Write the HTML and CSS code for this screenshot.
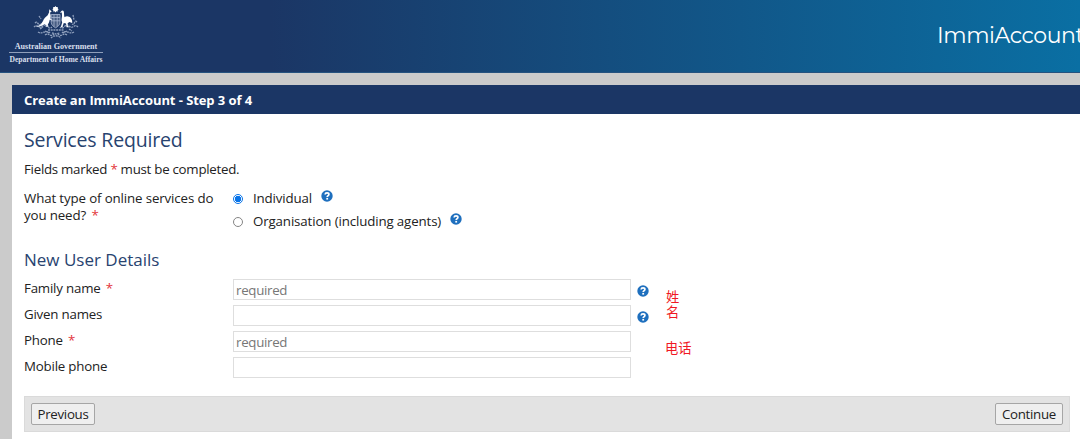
FILE: index.html
```
<!DOCTYPE html>
<html lang="en">
<head>
<meta charset="utf-8">
<title>ImmiAccount</title>
<link rel="stylesheet" href="styles.css">
</head>
<body>
<svg width="0" height="0" class="defs" aria-hidden="true">
  <symbol id="help" viewBox="0 0 12 12">
    <circle cx="6" cy="6" r="5.7" fill="#1e6fbe"/>
    <path d="M4.100 4.500C4.200 3.200 5 2.900 6 2.900c1.200 0 1.900.6 1.900 1.500C7.900 5.700 6.200 5.600 6.200 7.100" fill="none" stroke="#fff" stroke-width="1.700"/>
    <rect x="5.300" y="7.900" width="1.800" height="1.700" fill="#fff"/>
  </symbol>
</svg>
<header class="banner">
  <div class="brand">
    <svg class="crest" viewBox="0 0 46 34" aria-hidden="true">
      <g fill="#fff">
        <circle cx="22.500" cy="3" r="2.300"/>
        <path d="M22.500 0l.8 1.300 1.500-.4-.3 1.500 1.300.9-1.300.8.3 1.500-1.500-.3-.8 1.300-.9-1.300-1.500.3.4-1.500-1.300-.8 1.300-.9-.4-1.500 1.500.4z"/>
        <path d="M16.300 3.300l1.300 1.200 1 .9-.7.900-1.100.3c.9 2 1.300 3.800.6 5.800l1.900 1.300-.4.8-2.200-.8c-.5 2-.8 3.500-1.900 4.500l.8 2.500h-3.200l.6-1-1.300-1.800c-2 1.700-4.600 2.800-9.400 3 4-1.200 6.200-2.800 7.700-6 .9-2.300 2.800-4.300 4.700-5.700l1.300-2.600z"/>
        <path d="M28 5.600c.8-1.400 2.200-1.400 2.700-.3.600 1.900.2 4.200.8 6 1.900-1.700 4.700-1.200 6.500.9 1 1.300 1.400 2.900 1.200 4.700l-2.800-.8-1.800 1.200.7 3.200 1.500.8h-3.300l-.5-3.800-2.200-.6-1.300 3.600 1 .8h-2.700l1.400-5c-1.200-2-.3-4.400-.2-6.400l-.2-3.500-1.900.4z"/>
      </g>
      <path d="M18.200 8.500h8.800v7.700c0 2.700-2 4.200-4.400 5.600-2.400-1.400-4.400-2.900-4.400-5.600zM18.200 14.800H27M21 8.500v12M24.200 8.500v12M18.500 11.500H27" fill="#fff" fill-opacity=".2" stroke="#a9b8d2" stroke-width=".8"/>
      <path d="M2 17c3-3 3 4 6 1M1 21c4-4 5 3 9-1s5 5 9 1M44 16c-3-3-2 4-5 2M45 21c-4-4-5 3-9-1s-5 5-9 1M5 26c4 3 8-3 12 1M41 26c-4 3-8-3-12 1M12 29c4-3 5 3 9-1M34 29c-4-3-5 3-9-1M15 24h16M18 32c3-3 7-3 10 0M6 10l2 3M40 9l1 5M7 23l3-2M36 23l3 2M12 25l4 2M34 25l-4 2M19 27l4 1 4-1" fill="none" stroke="#b5c3da" stroke-width="1.300" stroke-dasharray="2 .7" opacity=".75"/>
    </svg>
    <div class="gov">Australian Government</div>
    <div class="dept">Department of Home Affairs</div>
  </div>
  <div class="product">ImmiAccount</div>
</header>
<main class="panel">
  <h1 class="titlebar"><span>Create an ImmiAccount - Step 3 of 4</span></h1>
  <div class="content">
    <h2 class="heading services-heading">Services Required</h2>
    <p class="note">Fields marked <b class="star">*</b> must be completed.</p>
    <div class="question">
      <div class="question-label">What type of online services do<br>you need? <b class="star gap">*</b></div>
      <div class="options">
        <label class="option"><i class="radio checked"></i><span class="individual">Individual</span><svg class="help"><use href="#help"/></svg></label>
        <label class="option"><i class="radio"></i><span class="organisation">Organisation (including agents)</span><svg class="help"><use href="#help"/></svg></label>
      </div>
    </div>
    <h2 class="heading details-heading">New User Details</h2>
    <div class="details">
      <div class="fields">
        <div class="row"><label>Family name <b class="star gap">*</b></label><input placeholder="required"><svg class="help"><use href="#help"/></svg></div>
        <div class="row"><label>Given names</label><input><svg class="help"><use href="#help"/></svg></div>
        <div class="row"><label>Phone <b class="star gap">*</b></label><input placeholder="required"></div>
        <div class="row"><label>Mobile phone</label><input></div>
      </div>
      <div class="remarks" lang="zh"><div class="name">姓<br>名</div><div class="phone">电话</div></div>
    </div>
    <div class="actions"><button class="previous">Previous</button><button class="continue">Continue</button></div>
  </div>
</main>
</body>
</html>
```
FILE: styles.css
```
* { box-sizing: border-box; }
body {
  margin: 0;
  height: 439px;
  overflow: hidden;
  background: #cbcbcb;
  color: #222;
  font: 13.3px/17px "Open Sans", "Noto Sans", sans-serif;
  letter-spacing: -.13px;
}
.defs { position: absolute; }
.banner {
  height: 73px;
  display: flex;
  justify-content: space-between;
  background: linear-gradient(90deg, #1b3665 0%, #1b3665 25%, #0a6fa3 100%);
  border-bottom: 1px solid #25527f;
  color: #fff;
  overflow: hidden;
}
.brand {
  width: 94px;
  margin-left: 9px;
  padding-top: 6px;
  display: flex;
  flex-direction: column;
  align-items: center;
  font-family: "Liberation Serif", serif;
  font-weight: bold;
  letter-spacing: 0;
  white-space: nowrap;
  color: #d8dfeb;
}
.crest { width: 46px; height: 34px; flex: none; }
.gov { font-size: 8.100px; line-height: 13px; height: 12px; }
.dept { width: 94px; border-top: 1px solid #8f9fbb; font-size: 7.600px; line-height: 14px; text-align: center; }
.product {
  width: 143px;
  flex: none;
  padding-top: 21px;
  font: 22px/30px Montserrat, "Open Sans", sans-serif;
  letter-spacing: -.42px;
  white-space: nowrap;
}
.panel { height: 354px; margin: 12px 0 0 12px; background: #fff; }
.titlebar {
  margin: 0;
  height: 29px;
  padding-left: 12px;
  background: #1b3665;
  color: #fff;
  font-size: 13px;
  line-height: 30px;
  letter-spacing: -.08px;
}
.content { padding: 14px 10px 0 12px; }
.heading { margin: 0; color: #28436f; font-weight: 400; }
.services-heading { height: 24px; font-size: 19.500px; line-height: 24px; letter-spacing: -.18px; }
.note { margin: 9px 0 0; height: 17px; letter-spacing: -.27px; }
.star { color: #e3343b; font-weight: 400; }
.gap { margin-left: 2px; }
.question { height: 54px; margin-top: 12px; display: flex; }
.question-label { width: 209px; }
.option { height: 23px; display: flex; align-items: flex-start; }
.radio {
  width: 10px;
  height: 10px;
  margin: 4px 10px 0 0;
  border: 1px solid #858585;
  border-radius: 50%;
}
.radio.checked { border-color: #0874e9; background: radial-gradient(circle, #0874e9 0 2.900px, #fff 3.400px); }
.help { width: 12px; height: 12px; flex: none; }
.option .help { margin: 0 0 0 9px; }
.details-heading { margin-top: 4px; height: 24px; font-size: 17px; line-height: 23px; letter-spacing: 0; }
.details { display: flex; margin-top: 7px; height: 117px; }
.fields { width: 641px; display: grid; grid-auto-rows: 26px; align-content: start; }
.row { display: flex; }
.row label { width: 209px; flex: none; padding-top: 1px; letter-spacing: -.2px; }
.row input {
  width: 398px;
  height: 21px;
  padding: 1px 2px;
  border: 1px solid #dedede;
  background: #fff;
  font: inherit;
  letter-spacing: -.3px;
}
.row input::placeholder { color: #777; opacity: 1; }
.row .help { margin: 6px 0 0 6px; }
.remarks { color: #f01824; font: 13.300px/14.500px "Noto Sans CJK SC", sans-serif; letter-spacing: 0; }
.name { margin: 11px 0 0 1px; }
.phone { margin-top: 22px; }
.actions {
  height: 36px;
  display: flex;
  justify-content: space-between;
  align-items: center;
  padding: 0 6px;
  background: #e3e3e3;
  border: 1px solid #dadada;
}
button {
  height: 22px;
  padding: 0;
  border: 1px solid #a6a6a6;
  border-radius: 2px;
  background: #efefef;
  color: #222;
  font: inherit;
  letter-spacing: -.3px;
  white-space: nowrap;
}
.previous { width: 64px; }
.continue { width: 68px; }
```
